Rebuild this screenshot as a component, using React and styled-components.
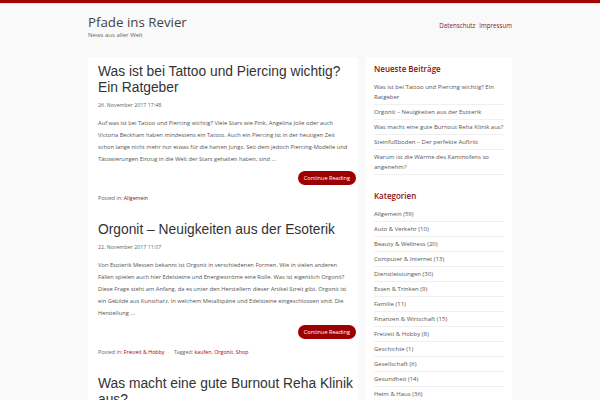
import React from 'react';
import styled, { createGlobalStyle } from 'styled-components';

const Global = createGlobalStyle`
  html, body { margin: 0; padding: 0; background: #f9f9f9; }
  body { font-family: "Open Sans", sans-serif; color: #555; overflow: hidden; }
  a { text-decoration: none; }
`;

const TopBar = styled.div`
  height: 3px;
  background: #a30000;
  border-bottom: 1px solid #f3dede;
`;

const Container = styled.div`
  width: 424px;
  margin: 0 auto;
`;

const Header = styled.header`
  display: flex;
  justify-content: space-between;
  align-items: flex-start;
  padding-top: 10px;
  height: 53px;
  box-sizing: border-box;
`;

const Brand = styled.div`
  display: flex;
  flex-direction: column;
`;

const SiteTitle = styled.div`
  font-size: 13.3px;
  line-height: 16px;
  color: #444;
`;

const Tagline = styled.div`
  font-size: 6px;
  line-height: 8px;
  margin-top: 1px;
  color: #666;
`;

const Nav = styled.nav`
  display: flex;
  gap: 4px;
  padding-top: 7px;
`;

const NavLink = styled.a`
  font-size: 6.2px;
  line-height: 10px;
  color: #8a1a1a;
`;

const Layout = styled.div`
  display: grid;
  grid-template-columns: 270px 146px;
  gap: 8px;
  align-items: start;
`;

const Main = styled.main`
  background: #fff;
  padding: 7px 3px 0 10px;
`;

const Article = styled.article`
  & + & {
    margin-top: 20px;
  }
`;

const Title = styled.h2`
  margin: 0;
  font-family: "Liberation Sans", Arial, sans-serif;
  font-weight: normal;
  font-size: 13.8px;
  line-height: 16px;
  color: #333;
`;

const Date = styled.div`
  font-size: 5.3px;
  line-height: 8px;
  color: #666;
  margin: 5px 0 8px;
`;

const Excerpt = styled.p`
  margin: 0;
  padding-right: 7px;
  font-size: 5.75px;
  line-height: 12px;
  color: #555;
`;

const ButtonRow = styled.div`
  display: flex;
  justify-content: flex-end;
  margin: 6px -1px 0 0;
`;

const Button = styled.a`
  background: #9c0000;
  color: #fff;
  font-size: 5.6px;
  line-height: 14px;
  padding: 0 6px;
  border-radius: 8px;
`;

const Meta = styled.div`
  font-size: 5.3px;
  line-height: 8px;
  color: #666;
  margin-top: 9px;
  display: flex;
`;

const MetaLink = styled.a`
  color: #a30000;
`;

const Sep = styled.span`
  color: #bbb;
  margin: 0 4px;
`;

const Sidebar = styled.aside`
  background: #fff;
  padding: 6px 8px 4px;
  display: flex;
  flex-direction: column;
  gap: 15px;
`;

const Widget = styled.section``;

const WidgetTitle = styled.h3`
  margin: 0 0 5px;
  font-size: 8px;
  line-height: 12px;
  font-weight: 600;
  color: #8a1010;
`;

const List = styled.ul`
  list-style: none;
  margin: 0;
  padding: 0;
`;

const Item = styled.li`
  font-size: 6px;
  line-height: 10px;
  padding: 2px 0;
  color: #555;
  border-bottom: 1px solid #f0f0f0;
`;

const posts = [
  {
    title: 'Was ist bei Tattoo und Piercing wichtig? Ein Ratgeber',
    date: '26. November 2017 17:48',
    text: 'Auf was ist bei Tattoo und Piercing wichtig? Viele Stars wie Pink, Angelina Jolie oder auch Victoria Beckham haben mindestens ein Tattoo. Auch ein Piercing ist in der heutigen Zeit schon lange nicht mehr nur etwas für die harten Jungs. Seit dem jedoch Piercing-Modelle und Tätowierungen Einzug in die Welt der Stars gehalten haben, sind …',
    cat: 'Allgemein',
    tags: null,
  },
  {
    title: 'Orgonit – Neuigkeiten aus der Esoterik',
    date: '22. November 2017 11:07',
    text: 'Von Esoterik Messen bekannt ist Orgonit in verschiedenen Formen. Wie in vielen anderen Fällen spielen auch hier Edelsteine und Energieströme eine Rolle. Was ist eigentlich Orgonit? Diese Frage steht am Anfang, da es unter den Herstellern dieser Artikel Streit gibt. Orgonit ist ein Gebilde aus Kunstharz, in welchem Metallspäne und Edelsteine eingeschlossen sind. Die Herstellung …',
    cat: 'Freizeit & Hobby',
    tags: ['kaufen', 'Orgonit', 'Shop'],
  },
];

const recent = [
  'Was ist bei Tattoo und Piercing wichtig? Ein Ratgeber',
  'Orgonit – Neuigkeiten aus der Esoterik',
  'Was macht eine gute Burnout Reha Klinik aus?',
  'Steinfußboden – Der perfekte Auftritt',
  'Warum ist die Wärme des Kaminofens so angenehm?',
];

const cats = [
  'Allgemein (59)', 'Auto & Verkehr (10)', 'Beauty & Wellness (20)', 'Computer & Internet (13)',
  'Dienstleistungen (30)', 'Essen & Trinken (9)', 'Familie (11)', 'Finanzen & Wirtschaft (15)',
  'Freizeit & Hobby (8)', 'Geschichte (1)', 'Gesellschaft (6)', 'Gesundheit (14)', 'Heim & Haus (36)',
];

export default function App() {
  return (
    <>
      <Global />
      <TopBar />
      <Container>
        <Header>
          <Brand>
            <SiteTitle>Pfade ins Revier</SiteTitle>
            <Tagline>News aus aller Welt</Tagline>
          </Brand>
          <Nav>
            <NavLink>Datenschutz</NavLink>
            <NavLink>Impressum</NavLink>
          </Nav>
        </Header>
        <Layout>
          <Main>
            {posts.map((p) => (
              <Article key={p.title}>
                <Title>{p.title}</Title>
                <Date>{p.date}</Date>
                <Excerpt>{p.text}</Excerpt>
                <ButtonRow>
                  <Button>Continue Reading</Button>
                </ButtonRow>
                <Meta>
                  <span>Posted in: <MetaLink>{p.cat}</MetaLink></span>
                  {p.tags && (
                    <>
                      <Sep>·</Sep>
                      <span>
                        Tagged:{' '}
                        {p.tags.map((t, i) => (
                          <React.Fragment key={t}>
                            <MetaLink>{t}</MetaLink>
                            {i < p.tags.length - 1 ? ', ' : ''}
                          </React.Fragment>
                        ))}
                      </span>
                    </>
                  )}
                </Meta>
              </Article>
            ))}
            <Article>
              <Title>Was macht eine gute Burnout Reha Klinik aus?</Title>
            </Article>
          </Main>
          <Sidebar>
            <Widget>
              <WidgetTitle>Neueste Beiträge</WidgetTitle>
              <List>
                {recent.map((r) => <Item key={r}>{r}</Item>)}
              </List>
            </Widget>
            <Widget>
              <WidgetTitle>Kategorien</WidgetTitle>
              <List>
                {cats.map((c) => <Item key={c}>{c}</Item>)}
              </List>
            </Widget>
          </Sidebar>
        </Layout>
      </Container>
    </>
  );
}
